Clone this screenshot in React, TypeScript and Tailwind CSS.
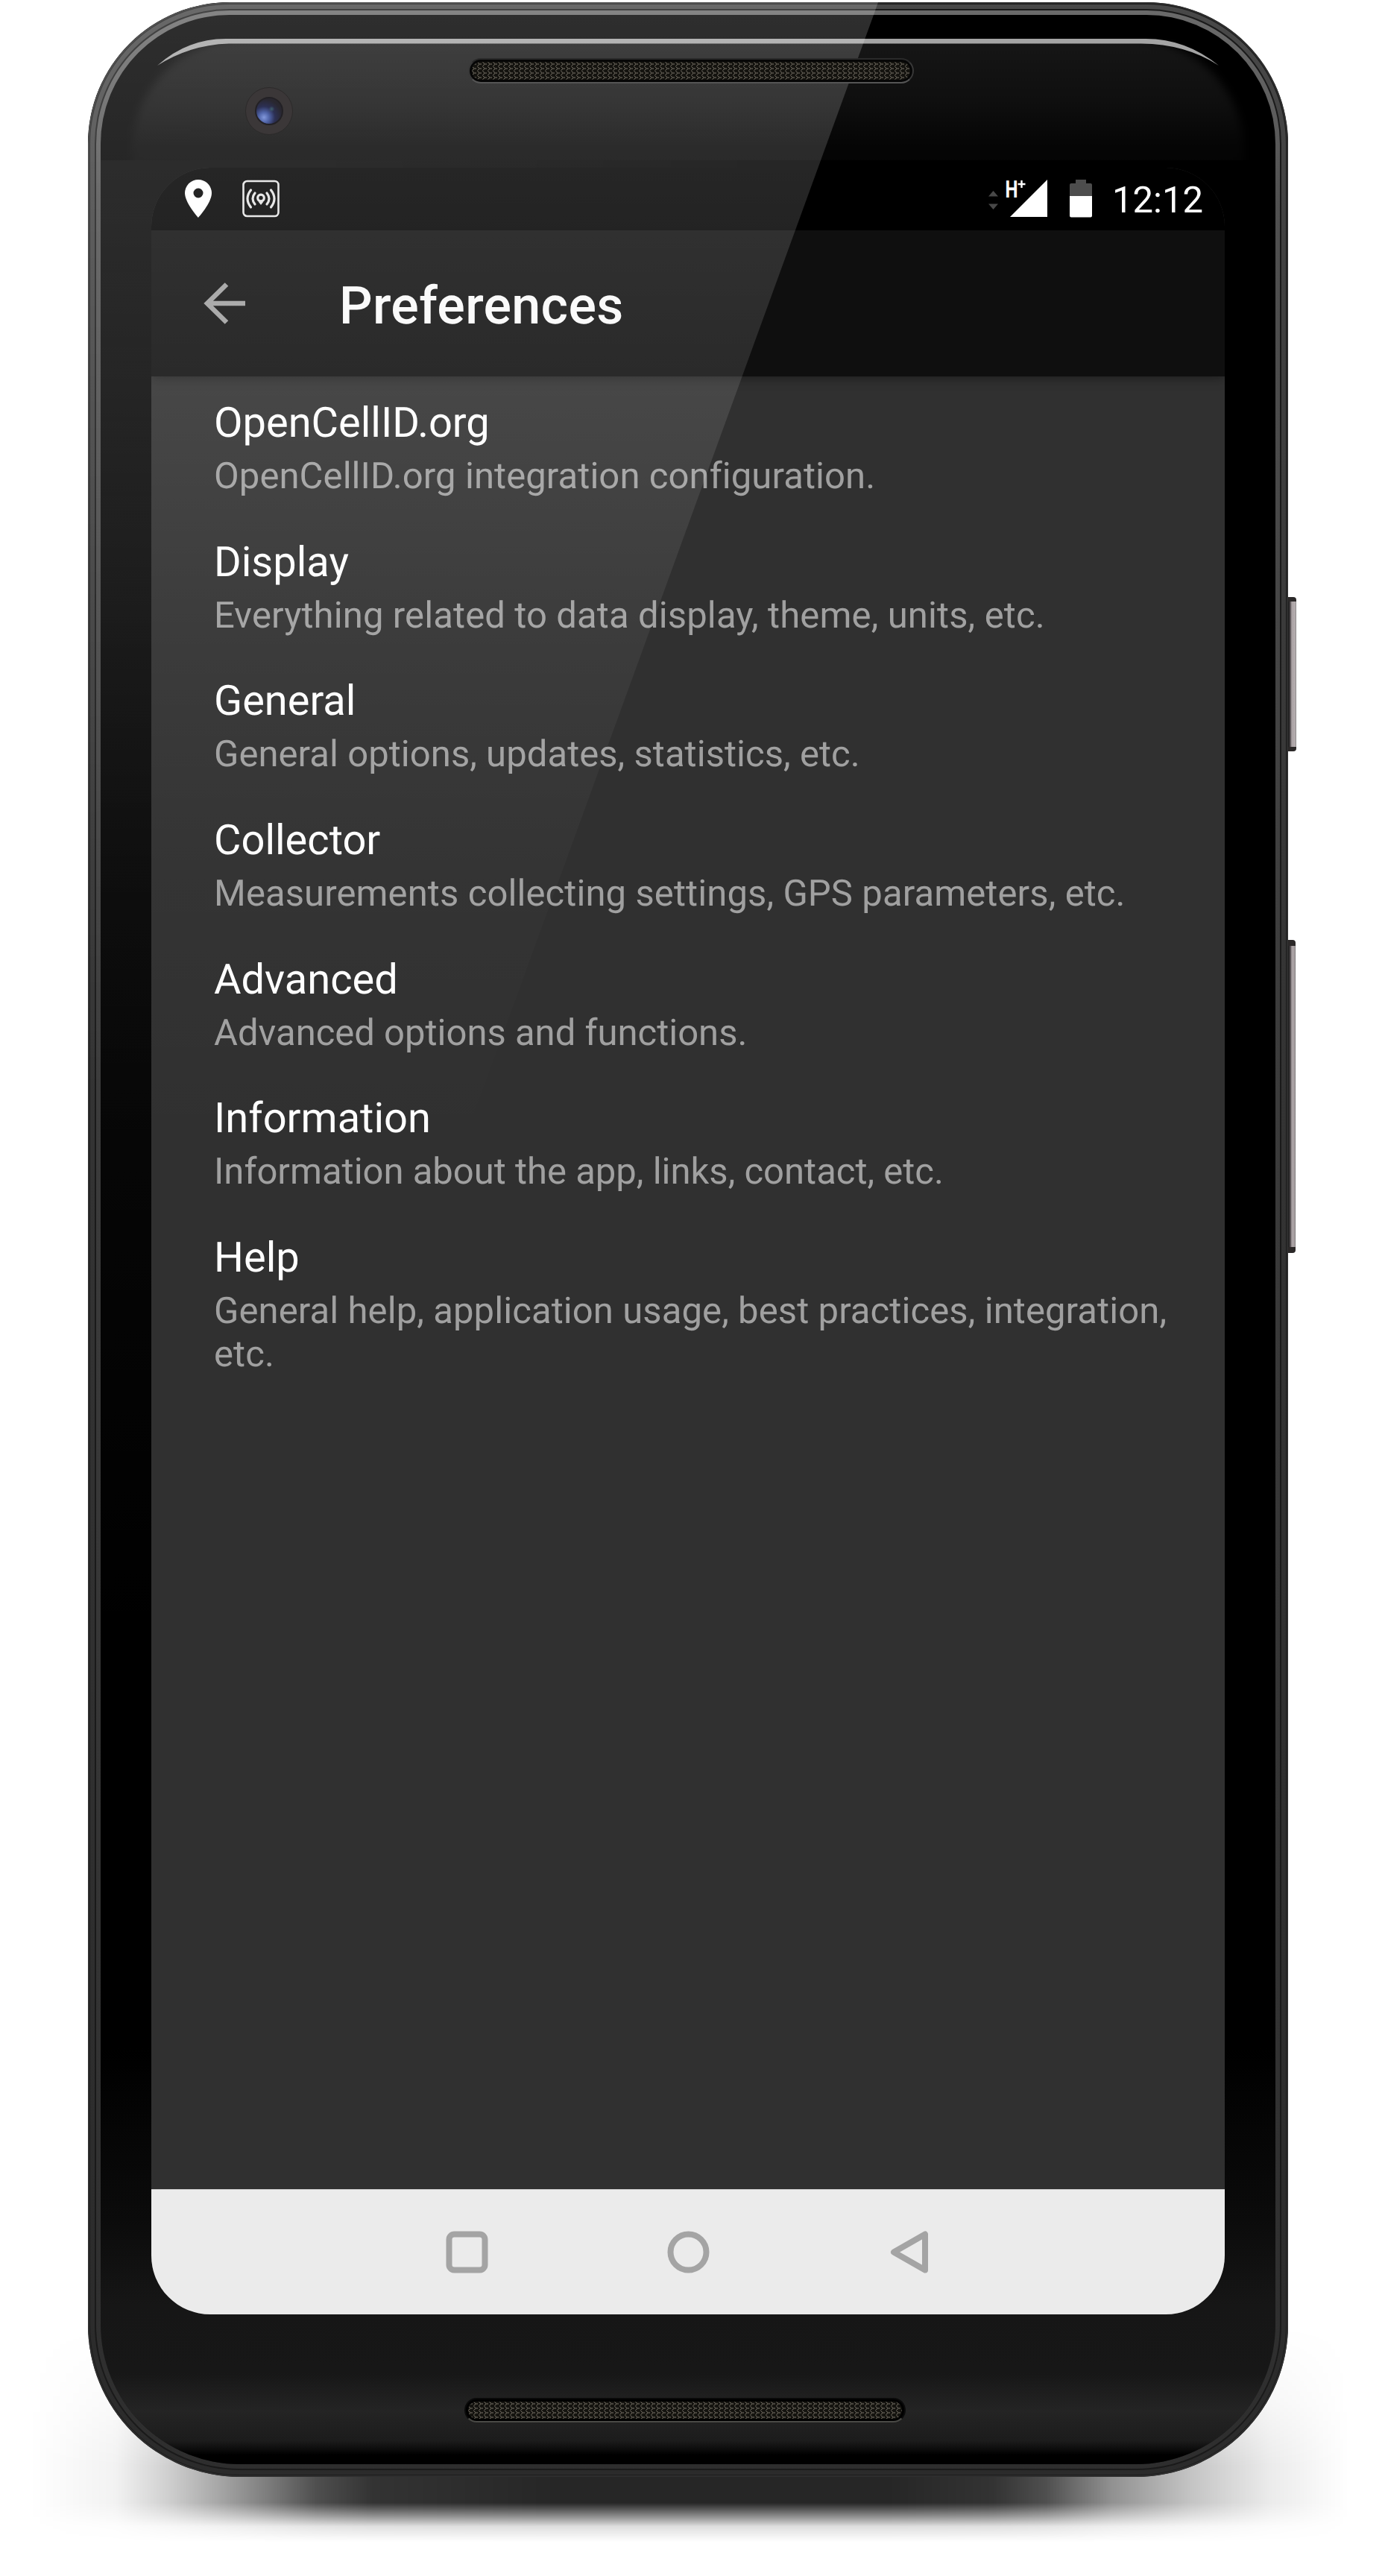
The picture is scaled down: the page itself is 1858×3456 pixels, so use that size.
import React from "react";

const items = [
  { title: "OpenCellID.org", summary: "OpenCellID.org integration configuration.", tracking: "tracking-[0.08px]" },
  { title: "Display", summary: "Everything related to data display, theme, units, etc.", tracking: "tracking-[0.12px]" },
  { title: "General", summary: "General options, updates, statistics, etc.", tracking: "tracking-[0.05px]" },
  { title: "Collector", summary: "Measurements collecting settings, GPS parameters, etc.", tracking: "tracking-[0.1px]" },
  { title: "Advanced", summary: "Advanced options and functions.", tracking: "tracking-normal" },
  { title: "Information", summary: "Information about the app, links, contact, etc.", tracking: "tracking-normal" },
  { title: "Help", summary: "General help, application usage, best practices, integration, etc.", tracking: "tracking-[0.09px]" },
];

function StatusBar() {
  return (
    <div className="flex h-[84px] shrink-0 items-start justify-between bg-black pl-[45px] pr-[28px] pt-[16px] text-white">
      <div className="flex items-start gap-[41px]">
        <svg className="h-[51px] w-[36px]" viewBox="0 0 36 51" fill="currentColor">
          <path fillRule="evenodd" d="M18 0C8 0 0 8 0 18c0 13 18 33 18 33s18-20 18-33C36 8 28 0 18 0Zm0 24.500a6.500 6.500 0 1 1 0-13 6.500 6.500 0 0 1 0 13Z" />
        </svg>
        <svg className="h-[51px] w-[50px]" viewBox="0 0 50 51" fill="none" stroke="#e4e4e4">
          <rect x="1.500" y="2" width="47" height="47" rx="5" strokeWidth="2.600" />
          <g strokeWidth="3.100" strokeLinecap="round">
            <path d="M11.500 14q-9 11.500 0 23M17 18q-6 7.500 0 15M38.500 14q9 11.500 0 23M33 18q6 7.500 0 15" />
          </g>
          <circle cx="25" cy="24.500" r="4.300" strokeWidth="3.200" />
          <path d="M21.500 29.500h7L25 34Z" fill="#e4e4e4" stroke="none" />
        </svg>
      </div>
      <div className="flex items-start gap-[27px]">
        <svg className="h-[52px] w-[82px] overflow-visible" viewBox="0 0 82 52" fill="currentColor">
          <path d="M6.500 15 13 22.500H0ZM0 32.500h13L6.500 40Z" fill="#484848" />
          <path d="M79 0v50H29Z" />
          <text x="22.500" y="24" fontFamily="Roboto" fontWeight="700" fontSize="32" textLength="17" lengthAdjust="spacingAndGlyphs">H</text>
          <path d="M44.500 1v10M39.500 6h10" stroke="currentColor" strokeWidth="2.400" />
        </svg>
        <svg className="h-[51px] w-[30px]" viewBox="0 0 30 51">
          <path d="M8 0h14v5h6a2 2 0 0 1 2 2v16H0V7a2 2 0 0 1 2-2h6Z" fill="#4d4d4d" />
          <path d="M0 22h30v26.500a2 2 0 0 1-2 2H2a2 2 0 0 1-2-2Z" fill="white" />
        </svg>
        <span className="w-[123px] pt-[2px] text-[49px] leading-[52px]">12:12</span>
      </div>
    </div>
  );
}

function AppBar() {
  return (
    <div className="z-10 flex h-[196px] shrink-0 items-center gap-[125px] bg-[#0f0f0f] pl-[70px] shadow-[0_2px_14px_rgba(0,0,0,0.400)]">
      <svg className="h-[56px] w-[57px] text-[#9f9f9f]" viewBox="0 0 57 56" fill="none" stroke="currentColor" strokeWidth="6.500">
        <path d="M56 28H6M31 2.500 5 28l26 25.500" />
      </svg>
      <h1 className="pt-[7px] text-[70px] font-medium leading-[82px] tracking-[0.3px] text-[#f9f9f9]">Preferences</h1>
    </div>
  );
}

function PreferenceList() {
  return (
    <ul className="flex flex-1 flex-col gap-[46.200px] pl-[84px] pr-[56px] pt-[22px]">
      {items.map(({ title, summary, tracking }) => (
        <li key={title}>
          <div className="h-[83px] text-[56px] leading-[80px] text-white">{title}</div>
          <div className={`text-[49px] leading-[57.500px] text-[#a0a0a0] ${tracking}`}>{summary}</div>
        </li>
      ))}
    </ul>
  );
}

function NavBar() {
  return (
    <div className="flex h-[168px] shrink-0 items-center justify-center gap-[240px] border-t border-[#d5d5d5] bg-[#ebebeb] text-[#a4a4a4]">
      <svg className="size-[57px]" viewBox="0 0 57 57" fill="none" stroke="currentColor" strokeWidth="8">
        <rect x="4.500" y="4.500" width="48" height="48" rx="7" />
      </svg>
      <svg className="size-[57px]" viewBox="0 0 57 57" fill="none" stroke="currentColor" strokeWidth="8">
        <circle cx="28.500" cy="28.500" r="24" />
      </svg>
      <svg className="size-[57px]" viewBox="0 0 57 57" fill="none" stroke="currentColor" strokeWidth="8" strokeLinejoin="round">
        <path d="M49 4.500v48L7 28.500Z" />
      </svg>
    </div>
  );
}

function Mesh({ id }: { id: string }) {
  return (
    <svg className="size-full rounded-full">
      <defs>
        <pattern id={id} width="7" height="6" patternUnits="userSpaceOnUse">
          <rect width="7" height="6" fill="#14130f" />
          <path d="M0.500 0.500l3 2.500L0.500 5.500M4 3h2" stroke="#7d776c" strokeWidth="1" fill="none" />
        </pattern>
      </defs>
      <rect width="100%" height="100%" fill={`url(#${id})`} />
    </svg>
  );
}

function Forehead() {
  return (
    <div className="flex h-[205px] w-full shrink-0 items-start gap-[235px] pl-[194px] pt-[58px]">
      <div className="z-20 mt-[39px] flex size-[64px] items-center justify-center rounded-full border border-[#2c2a2a] bg-[#3b3738]">
        <div className="size-[38px] rounded-full border-2 border-[#232125] bg-[radial-gradient(circle_at_60%_42%,#3f5f6c_0,transparent_14%),radial-gradient(circle_at_30%_75%,#8298dc_0,#5064a8_20%,#2c3054_42%,#29272f_70%)]" />
      </div>
      <div className="z-20 h-[34px] w-[598px] rounded-full border-2 border-t-[#2a2a2a] border-x-[#383838] border-b-[#555] bg-[#060606] p-[3px]">
        <Mesh id="ear" />
      </div>
    </div>
  );
}

export default function App() {
  return (
    <main className="relative h-[3456px] w-[1858px] overflow-hidden bg-white pl-[118px] pt-[3px] font-[Roboto,sans-serif] [text-rendering:geometricPrecision]">
      {/* ground shadow */}
      <div className="absolute left-[40px] top-[3120px] h-[290px] w-[1770px] bg-[linear-gradient(90deg,transparent_0%,rgba(0,0,0,0.050)_6.500%,rgba(0,0,0,0.190)_10.500%,rgba(0,0,0,0.340)_14.200%,rgba(0,0,0,0.510)_18%,rgba(0,0,0,0.690)_21.700%,rgba(0,0,0,0.800)_26%,rgba(0,0,0,0.850)_40%,rgba(0,0,0,0.850)_65%,rgba(0,0,0,0.800)_73%,rgba(0,0,0,0.690)_77%,rgba(0,0,0,0.430)_82%,rgba(0,0,0,0.230)_88%,rgba(0,0,0,0.080)_94%,transparent_100%)] [mask-image:linear-gradient(180deg,transparent_0%,rgba(0,0,0,0.400)_35%,black_65%,black_82%,rgba(0,0,0,0.550)_88%,rgba(0,0,0,0.150)_93%,transparent_100%)]" />

      {/* side keys */}
      <div className="absolute left-[1724px] top-[801px] h-[207px] w-[15px] rounded-r-[4px] border-y-[6px] border-[#2b2828] bg-[linear-gradient(90deg,#222_0_35%,#4d474a_45%,#aba3a5_60%,#b5adaf_90%,#777)]" />
      <div className="absolute left-[1724px] top-[1261px] h-[420px] w-[14px] rounded-r-[4px] border-y-[8px] border-[#2b2828] bg-[linear-gradient(90deg,#222_0_35%,#4d474a_50%,#aba3a5_65%,#a79fa1_90%,#666)]" />

      {/* metal frame */}
      <div className="relative h-[3320px] w-[1610px] overflow-hidden rounded-t-[190px] rounded-b-[204px] bg-[#1c1c1c] p-[3px] shadow-[inset_0_0_0_2px_#2e2e2e]">
        <div className="h-full rounded-t-[187px] rounded-b-[201px] bg-[linear-gradient(180deg,#484848,#404040_10%,#343434_40%,#2b2b2b)] p-[6px]">
          <div className="h-full rounded-t-[181px] rounded-b-[195px] bg-[#1a1a1a] p-[2px]">
            <div className="h-full rounded-t-[179px] rounded-b-[193px] bg-[linear-gradient(180deg,#6a6a6a,#505050_8%,#3c3c3c_40%,#2e2e2e)] p-[6px]">
              {/* front glass */}
              <div className="relative isolate flex h-full flex-col items-center overflow-hidden rounded-t-[173px] rounded-b-[187px] bg-[linear-gradient(180deg,#000_0%,#000_83%,#0b0b0b_90%,#161616_93.500%,#171717_96%)]">
                <div className="absolute inset-x-0 bottom-0 -z-10 h-[210px] bg-[linear-gradient(180deg,transparent_0%,transparent_42%,#242424_66%,#1c1c1c_85%,#000_94%)]" />
                <div className="absolute inset-x-0 top-[32px] -z-10 h-[163px] overflow-hidden px-[42px]">
                  <div className="h-[240px] rounded-t-[150px] bg-[linear-gradient(180deg,#161616,#0f0f0f_35%,#050505_60%,#030303)] blur-[6px]" />
                </div>
                <div className="absolute left-0 top-[195px] -z-10 h-[2000px] w-[900px] bg-[linear-gradient(180deg,rgba(255,255,255,0.028),rgba(255,255,255,0.050)_30%,transparent)] [mask-image:linear-gradient(90deg,black_30%,transparent)]" />
                {/* glint along the top edge */}
                <svg className="absolute inset-x-0 top-[32px] h-[38px] w-full" viewBox="0 0 1576 38" fill="#a4a4a4">
                  <path d="M76 36Q116 0 168 0H1402Q1456 0 1500 36Q1456 7 1396 6.500H172Q120 8 76 36Z" />
                </svg>

                <Forehead />
                <section className="flex h-[2880px] w-[1440px] shrink-0 flex-col overflow-hidden rounded-[79px] bg-[#303030]">
                  <StatusBar />
                  <AppBar />
                  <PreferenceList />
                  <NavBar />
                </section>
                <div className="flex w-full flex-1 items-start pl-[488px] pt-[112px]">
                  <div className="h-[33px] w-[592px] rounded-full border-2 border-[#0a0a0a] border-b-[#4a4a46] bg-black p-[3px]">
                    <Mesh id="mic" />
                  </div>
                </div>

                {/* diagonal reflection */}
                <div className="pointer-events-none absolute inset-x-0 top-0 z-10 h-[1600px] bg-[linear-gradient(180deg,rgba(255,255,255,0.180)_0%,rgba(255,255,255,0.150)_13%,rgba(255,255,255,0.112)_30%,rgba(255,255,255,0.055)_53%,rgba(255,255,255,0.020)_72%,transparent_95%)] [clip-path:polygon(0_0,1037px_0,455px_1600px,0_1600px)]" />
              </div>
            </div>
          </div>
        </div>
        {/* brighter rim on the lit side */}
        <div className="pointer-events-none absolute inset-0 rounded-t-[190px] rounded-b-[204px] border-[17px] border-white/18 [clip-path:polygon(0_0,1060px_0,1054px_17px,17px_500px,17px_1500px,0_1500px)] [mask-image:linear-gradient(180deg,black,transparent_45%)]" />
      </div>
    </main>
  );
}
